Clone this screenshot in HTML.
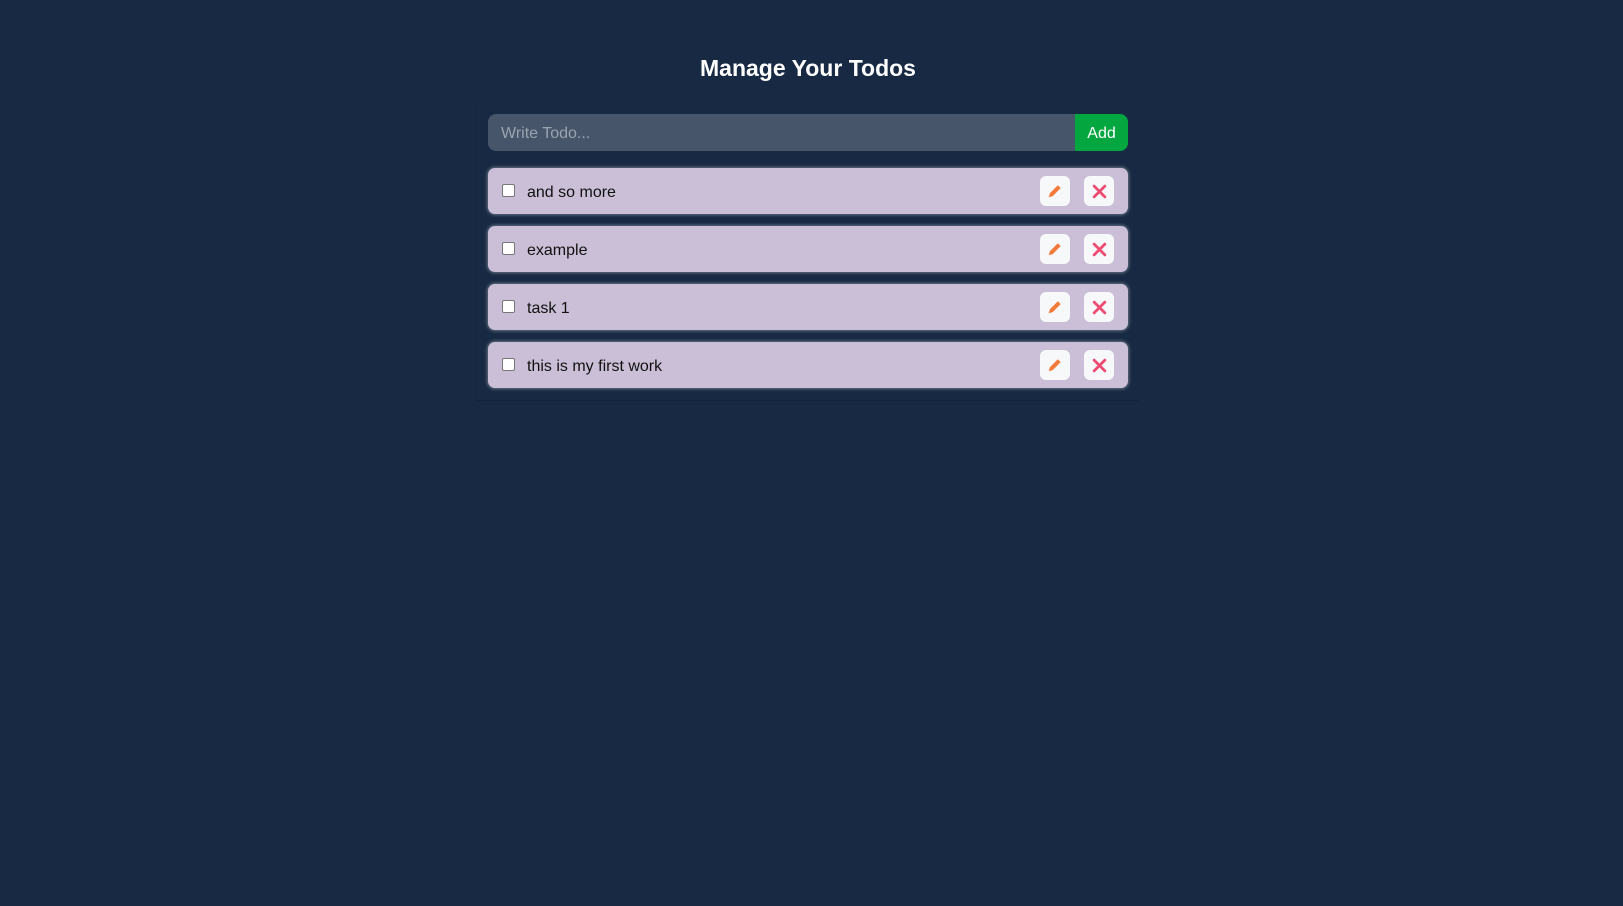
<!DOCTYPE html>
<html><head><style>
body{margin:0;background:#172943;width:1623px;height:906px;font-family:"Liberation Sans",sans-serif;position:relative;overflow:hidden}
h1{position:absolute;top:55px;left:0;width:1616px;text-align:center;margin:0;color:#fff;font-size:23px;font-weight:bold}
.wrap{position:absolute;left:476px;top:100px;width:662px;height:300px;box-shadow:0 1px 1px rgba(0,0,0,.2)}
.inp{position:absolute;left:488px;top:114px;width:587px;height:37px;background:#465569;border-radius:8px 0 0 8px;color:#9aa3b1;font-size:16px;line-height:40px;padding-left:13px;box-sizing:border-box}
.add{position:absolute;left:1075px;top:114px;width:53px;height:37px;background:#03a63f;border-radius:0 8px 8px 0;color:#fff;font-size:16px;line-height:40px;text-align:center}
.row{position:absolute;left:488px;width:640px;height:46px;background:#cbbfd7;border-radius:7px;box-shadow:0 0 3px 1px rgba(255,255,255,.35)}
.cb{position:absolute;left:14px;top:16px;width:11px;height:11px;background:#fff;border:1px solid #777;border-radius:2px}
.t{position:absolute;left:39px;top:2px;line-height:46px;font-size:16px;color:#111}
.b{position:absolute;top:8px;width:30px;height:30px;background:#f7f8fa;border-radius:6px;display:flex;align-items:center;justify-content:center}
</style></head><body>
<h1>Manage Your Todos</h1>
<div class="wrap"></div>
<div class="inp">Write Todo...</div><div class="add">Add</div>
<div class="row" style="top:168px"><div class="cb"></div><div class="t">and so more</div>
<div class="b" style="left:552px"><svg width="16" height="16" viewBox="0 0 14 14"><path d="M1.5 12.5 L2.5 9 L9.5 2 L12 4.5 L5 11.5 Z" fill="#f27a3a"/></svg></div>
<div class="b" style="left:596px"><svg width="15" height="15" viewBox="0 0 14 14"><path d="M2 2 L12 12 M12 2 L2 12" stroke="#ee4b73" stroke-width="2.6" stroke-linecap="round"/></svg></div></div>
<div class="row" style="top:226px"><div class="cb"></div><div class="t">example</div>
<div class="b" style="left:552px"><svg width="16" height="16" viewBox="0 0 14 14"><path d="M1.5 12.5 L2.5 9 L9.5 2 L12 4.5 L5 11.5 Z" fill="#f27a3a"/></svg></div>
<div class="b" style="left:596px"><svg width="15" height="15" viewBox="0 0 14 14"><path d="M2 2 L12 12 M12 2 L2 12" stroke="#ee4b73" stroke-width="2.6" stroke-linecap="round"/></svg></div></div>
<div class="row" style="top:284px"><div class="cb"></div><div class="t">task 1</div>
<div class="b" style="left:552px"><svg width="16" height="16" viewBox="0 0 14 14"><path d="M1.5 12.5 L2.5 9 L9.5 2 L12 4.5 L5 11.5 Z" fill="#f27a3a"/></svg></div>
<div class="b" style="left:596px"><svg width="15" height="15" viewBox="0 0 14 14"><path d="M2 2 L12 12 M12 2 L2 12" stroke="#ee4b73" stroke-width="2.6" stroke-linecap="round"/></svg></div></div>
<div class="row" style="top:342px"><div class="cb"></div><div class="t">this is my first work</div>
<div class="b" style="left:552px"><svg width="16" height="16" viewBox="0 0 14 14"><path d="M1.5 12.5 L2.5 9 L9.5 2 L12 4.5 L5 11.5 Z" fill="#f27a3a"/></svg></div>
<div class="b" style="left:596px"><svg width="15" height="15" viewBox="0 0 14 14"><path d="M2 2 L12 12 M12 2 L2 12" stroke="#ee4b73" stroke-width="2.6" stroke-linecap="round"/></svg></div></div>
</body></html>
